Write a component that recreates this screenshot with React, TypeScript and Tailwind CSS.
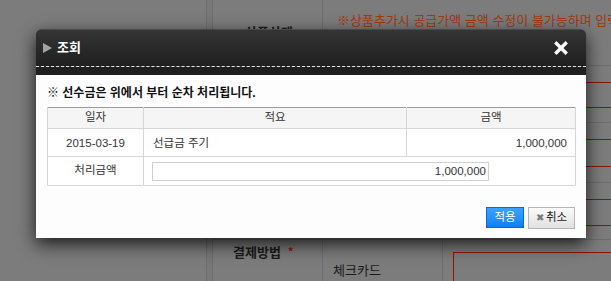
import { X } from 'lucide-react'

const font = "font-['Liberation_Sans','Noto_Sans_CJK_KR',sans-serif]"

// 뒤쪽 폼의 입력 행 (모달 뒤에 깔림)
const formRows = [
  { h: 'h-[57px]', box: 'h-[26px]' },
  { h: 'h-[60px]', box: 'h-[28px]' },
  { h: 'h-[57px]', box: 'h-[27px]' },
]

function BackgroundPage() {
  return (
    <div className={`flex w-[611px] h-[281px] bg-[#7c7c7c] overflow-hidden ${font}`}>
      <div className="w-[206px] shrink-0" />
      <div className="w-[7px] shrink-0 border-l border-r border-[#6d6d6d] bg-[#787878]" />
      <div className="flex flex-col flex-1 min-w-0">
        {/* 상단 안내 */}
        <div className="flex h-[66px] shrink-0 border-b border-[#6e6e6e]">
          <div className="w-[110px] shrink-0 border-r border-[#6e6e6e] pt-[23px] pl-[32px] text-[13px] font-bold text-[#1a1a1a]">
            상품상태
          </div>
          <div className="pl-[14px] pt-[11px] text-[13px] whitespace-nowrap text-[#a2390f]">
            ※상품추가시 공급가액 금액 수정이 불가능하며 입력
          </div>
        </div>
        {formRows.map((row, i) => (
          <div key={i} className={`flex ${row.h} shrink-0 border-b border-[#6e6e6e]`}>
            <div className="w-[110px] shrink-0 border-r border-[#6e6e6e]" />
            <div className="w-[120px] shrink-0 border-r border-[#6e6e6e]" />
            <div className="flex-1 pl-[10px] pt-[16px] -mr-[20px]">
              <div className={`${row.box} border border-[#8a1800]`} />
            </div>
          </div>
        ))}
        <div className="flex flex-1 min-h-0 overflow-hidden">
          <div className="w-[110px] shrink-0 border-r border-[#6e6e6e] pl-[20px] pt-[3px] text-[13px] font-bold text-[#1a1a1a]">
            결제방법 <span className="text-[#8a1010] text-[11px] align-top ml-[4px]">*</span>
          </div>
          <div className="w-[120px] shrink-0 border-r border-[#6e6e6e] pl-[10px] pt-[21px] text-[13px] text-[#1a1a1a]">
            체크카드
          </div>
          <div className="flex-1 pl-[10px] pt-[12px] -mr-[20px]">
            <div className="h-[40px] border border-[#8a1800]" />
          </div>
        </div>
      </div>
    </div>
  )
}

export default function App() {
  return (
    <div className="relative w-[611px] h-[281px]">
      <BackgroundPage />

      {/* 조회 모달 */}
      <div
        className={`absolute left-[36px] top-[29px] w-[550px] h-[209px] flex flex-col rounded-t-[6px] shadow-[0_6px_18px_rgba(0,0,0,0.8)] ${font}`}
      >
        <div className="rounded-t-[6px] bg-[#1f1f1f] border-t border-[#4a4a4a]">
          <div className="flex items-center h-[37px] pl-[7px] pr-[16px] rounded-t-[6px] bg-gradient-to-b from-[#353535] to-[#1f1f1f] border-b border-dashed border-[#e6e6e6]">
            <span className="w-0 h-0 border-y-[5px] border-y-transparent border-l-[9px] border-l-[#a3a3a3]" />
            <span className="ml-[5px] text-[13px] font-bold text-white">조회</span>
            <X className="ml-auto w-[18px] h-[18px] text-white" strokeWidth={4.5} strokeLinecap="square" />
          </div>
          <div className="h-[8px]" />
        </div>

        <div className="flex-1 flex flex-col bg-[#fdfdfd] pl-[11px] pr-[10px] pt-[11px]">
          <p className="text-[12px] leading-[14px] font-bold text-[#111]">
            ※ 선수금은 위에서 부터 순차 처리됩니다.
          </p>

          <table className="mt-[7px] w-[528px] border-collapse table-fixed text-[11.5px] text-[#333]">
            <colgroup>
              <col className="w-[96px]" />
              <col className="w-[263px]" />
              <col className="w-[169px]" />
            </colgroup>
            <thead>
              <tr className="h-[21px] bg-[#f5f5f5] border-t border-[#9c9c9c]">
                <th className="font-normal border-l border-r border-b border-[#d6d6d6]">일자</th>
                <th className="font-normal border-r border-b border-[#d6d6d6]">적요</th>
                <th className="font-normal border-r border-b border-[#d6d6d6]">금액</th>
              </tr>
            </thead>
            <tbody>
              <tr className="h-[28px] bg-white">
                <td className="text-center pt-[2px] border-l border-r border-b border-[#d6d6d6]">2015-03-19</td>
                <td className="pl-[9px] pt-[2px] border-r border-b border-[#d6d6d6]">선급금 주기</td>
                <td className="text-right pr-[8px] pt-[2px] border-r border-b border-[#d6d6d6]">1,000,000</td>
              </tr>
              <tr className="h-[29px] bg-white">
                <td className="text-center border-l border-r border-b border-[#d6d6d6]">처리금액</td>
                <td colSpan={2} className="pl-[8px] border-r border-b border-[#d6d6d6]">
                  <input
                    readOnly
                    value="1,000,000"
                    className="block w-[337px] h-[19px] border border-[#cfcfcf] bg-white text-right pr-[2px] text-[11.5px] text-[#333] outline-none"
                  />
                </td>
              </tr>
            </tbody>
          </table>

          <div className="flex justify-end items-start mt-[21px] pr-[1px]">
            <button className="w-[38px] h-[21px] border border-[#0d68cf] bg-gradient-to-b from-[#3aa2ff] to-[#0b80f3] text-white text-[11.5px] leading-none">
              적용
            </button>
            <button className="ml-[4px] w-[47px] h-[22px] flex items-center justify-center gap-[2px] border border-[#b5b5b5] bg-gradient-to-b from-[#fbfbfb] to-[#e1e1e1] text-[#222] text-[11.5px] leading-none">
              <span className="text-[10px] text-[#7a7a7a]">✖</span>
              취소
            </button>
          </div>
        </div>
      </div>
    </div>
  )
}
